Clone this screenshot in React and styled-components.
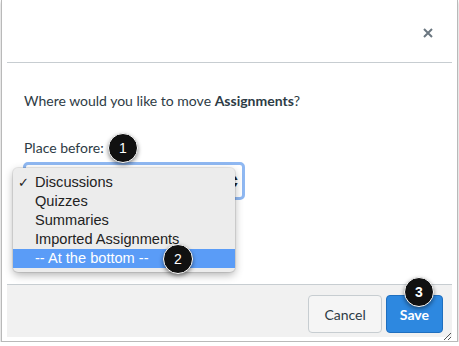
import styled, { createGlobalStyle } from "styled-components";

const GlobalStyle = createGlobalStyle`
  body {
    margin: 0;
    background: #fff;
    font-family: Lato, "Open Sans", sans-serif;
  }
`;

const Frame = styled.div`
  width: 445px;
  margin-left: 1px;
  padding: 0 5px 4px;
  border: 1px solid #b9b9b9;
  border-top: none;
  box-shadow: 0 2px 3px rgba(0, 0, 0, 0.25);
  background: #fff;
`;

const Header = styled.div`
  height: 62px;
  display: flex;
  align-items: center;
  justify-content: flex-end;
  padding-right: 17px;
  border-bottom: 1px solid #c7cdd1;
`;

const CloseButton = styled.button`
  border: none;
  background: none;
  padding: 0;
  width: 14px;
  height: 14px;
  display: flex;
  align-items: center;
  justify-content: center;
  margin-top: 4px;
`;

const Body = styled.div`
  height: 221px;
  padding: 0 17px;
  color: #2d3b45;
  font-size: 14px;
`;

const Question = styled.p`
  margin: 0;
  padding-top: 29px;
  line-height: 18px;
`;

const Label = styled.div`
  position: relative;
  margin-top: 29px;
  line-height: 18px;
  display: inline-block;
`;

const Badge = styled.div`
  position: absolute;
  width: 28px;
  height: 28px;
  border-radius: 50%;
  background: #111;
  border: 1px solid #fff;
  box-shadow: 0 2px 4px rgba(0, 0, 0, 0.45);
  color: #fff;
  font-family: "Liberation Sans", Arial, sans-serif;
  font-size: 14px;
  display: flex;
  align-items: center;
  justify-content: center;
  z-index: 5;
`;

const SelectWrap = styled.div`
  position: relative;
  margin-top: 5px;
  margin-left: -1px;
  width: 222px;
  height: 38px;
  box-sizing: border-box;
  padding-right: 3px;
  border: 3px solid #8fb8f2;
  border-radius: 5px;
  background: #fff;
  display: flex;
  justify-content: flex-end;
  align-items: center;
`;

const SelectArrows = styled.div`
  font-size: 7px;
  line-height: 7px;
  color: #222;
  display: flex;
  flex-direction: column;
`;

const Menu = styled.ul`
  position: absolute;
  left: -13px;
  top: 3px;
  width: 222px;
  margin: 0;
  padding: 5px 0 4px;
  list-style: none;
  background: #ececec;
  border-radius: 5px;
  box-shadow: 0 3px 8px rgba(0, 0, 0, 0.3), 0 0 0 1px rgba(0, 0, 0, 0.08);
  font-family: "Liberation Sans", Arial, sans-serif;
  font-size: 14.6px;
  color: #222;
  z-index: 3;
`;

const MenuItem = styled.li`
  position: relative;
  height: 19px;
  line-height: 19px;
  padding-left: 22px;
  background: ${(p) => (p.$active ? "#5a9cf7" : "transparent")};
  color: ${(p) => (p.$active ? "#fff" : "#222")};
`;

const Check = styled.span`
  position: absolute;
  left: 5px;
  font-size: 13px;
`;

const Footer = styled.div`
  height: 42px;
  padding: 10px 9px 0 0;
  background: #f1f1f1;
  border-top: 1px solid #c7cdd1;
  display: flex;
  justify-content: flex-end;
  align-items: flex-start;
  gap: 4px;
  position: relative;
`;

const Button = styled.button`
  height: 38px;
  box-sizing: border-box;
  padding: 0 ${(p) => (p.$primary ? 13 : 15)}px;
  border-radius: 4px;
  font-family: Lato, sans-serif;
  font-size: 14px;
  border: 1px solid ${(p) => (p.$primary ? "#1f6fbf" : "#c7cdd1")};
  background: ${(p) => (p.$primary ? "#2d88e0" : "#f5f5f5")};
  color: ${(p) => (p.$primary ? "#fff" : "#2d3b45")};
  font-weight: ${(p) => (p.$primary ? 700 : 400)};
  position: relative;
`;

const Grip = styled.svg`
  position: absolute;
  right: 0;
  bottom: -4px;
`;

export default function App() {
  return (
    <>
      <GlobalStyle />
      <Frame>
        <Header>
          <CloseButton aria-label="Close">
            <svg width="10" height="10" viewBox="0 0 10 10">
              <path d="M1 1 L9 9 M9 1 L1 9" stroke="#6b7780" strokeWidth="2" />
            </svg>
          </CloseButton>
        </Header>
        <Body>
          <Question>
            Where would you like to move <b>Assignments</b>?
          </Question>
          <Label>
            Place before:
            <Badge style={{ left: 84, top: -6 }}>1</Badge>
          </Label>
          <SelectWrap>
            <SelectArrows>
              <span>▲</span>
              <span>▼</span>
            </SelectArrows>
            <Menu>
              <MenuItem>
                <Check>✓</Check>Discussions
              </MenuItem>
              <MenuItem>Quizzes</MenuItem>
              <MenuItem>Summaries</MenuItem>
              <MenuItem>Imported Assignments</MenuItem>
              <MenuItem $active>
                -- At the bottom --
                <Badge style={{ left: 150, top: -5 }}>2</Badge>
              </MenuItem>
            </Menu>
          </SelectWrap>
        </Body>
        <Footer>
          <Button>Cancel</Button>
          <Button $primary>
            Save
            <Badge style={{ left: 17, top: -19 }}>3</Badge>
          </Button>
          <Grip width="9" height="9" viewBox="0 0 9 9">
            <path d="M8 1 L1 8 M8 5 L5 8" stroke="#555" strokeWidth="1" />
          </Grip>
        </Footer>
      </Frame>
    </>
  );
}
